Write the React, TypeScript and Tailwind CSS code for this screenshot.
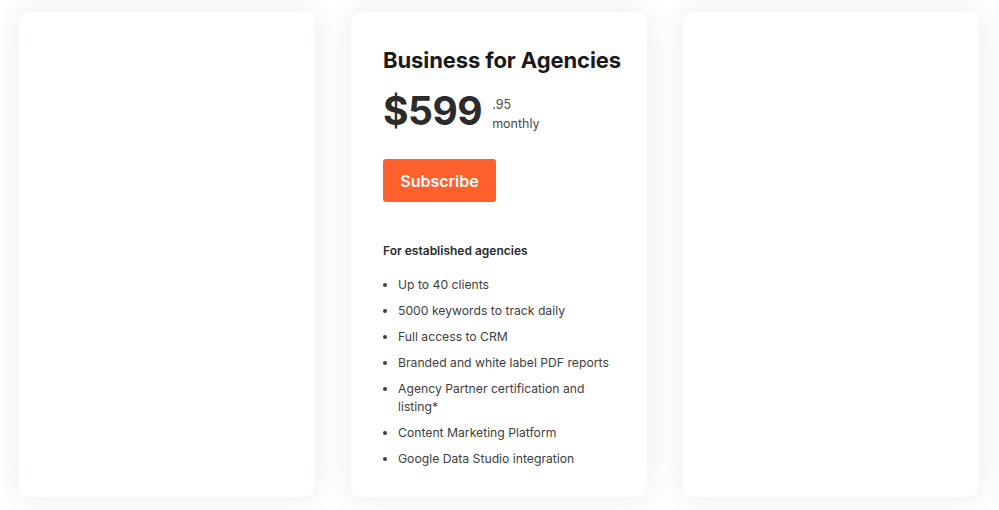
import React from "react";

const features = [
  "Up to 40 clients",
  "5000 keywords to track daily",
  "Full access to CRM",
  "Branded and white label PDF reports",
  "Agency Partner certification and listing*",
  "Content Marketing Platform",
  "Google Data Studio integration",
];

function Card({ children }: { children?: React.ReactNode }) {
  return (
    <div className="w-[296px] h-[485px] bg-white rounded-[10px] shadow-[0_0_30px_rgba(20,30,60,0.09)]">
      {children}
    </div>
  );
}

export default function App() {
  return (
    <div
      className="w-[999px] h-[510px] bg-white overflow-hidden"
      style={{ fontFamily: "Inter, 'Noto Sans', sans-serif" }}
    >
      <div className="flex gap-[36px] pl-[19px] pt-[12px]">
        <Card />
        <Card>
          <div className="pl-[32px] pr-[20px] pt-[33px]">
            <h2 className="text-[22px] leading-[30px] font-bold text-[#1a1a1a] tracking-[-0.1px]">
              Business for Agencies
            </h2>
            <div className="flex items-start mt-[14px]">
              <span className="text-[39px] leading-[44px] font-bold text-[#2b2b2b] tracking-[-0.5px]">
                $599
              </span>
              <div className="ml-[10px] mt-[6px] text-[12.5px] leading-[19px] text-[#4a4a4a]">
                <div>.95</div>
                <div>monthly</div>
              </div>
            </div>
            <button className="mt-[26px] w-[113px] h-[43px] rounded-[3px] bg-[#ff602c] text-white text-[16px] font-semibold">
              Subscribe
            </button>
            <div className="mt-[40px] text-[12px] leading-[18px] font-semibold text-[#2b2b2b]">
              For established agencies
            </div>
            <ul className="mt-[16px] list-disc pl-[15px] text-[12.2px] leading-[18px] text-[#404040] flex flex-col gap-[8px]">
              {features.map((f) => (
                <li key={f}>{f}</li>
              ))}
            </ul>
          </div>
        </Card>
        <Card />
      </div>
    </div>
  );
}
